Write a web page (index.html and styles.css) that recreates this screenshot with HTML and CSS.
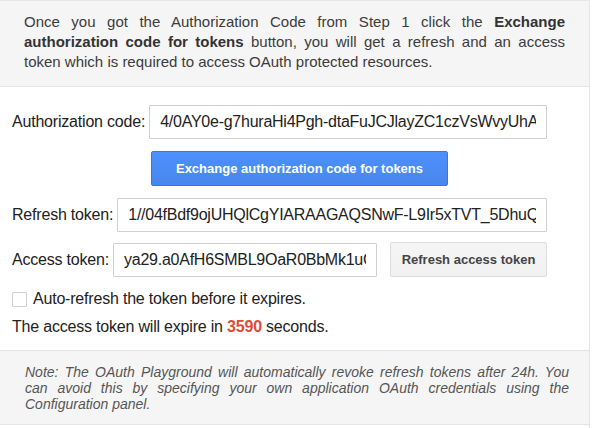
FILE: index.html
```html
<!DOCTYPE html>
<html lang="en">
<head>
<meta charset="utf-8">
<title>OAuth Playground - Step 2</title>
<link rel="stylesheet" href="styles.css">
</head>
<body>
<div class="panel">
  <div class="intro"><span>Once you got the Authorization Code from Step 1 click the</span> <b>Exchange</b> <b>authorization code for tokens</b> <span>button, you will get a refresh and an access</span> <span>token which is required to access OAuth protected resources.</span></div>
  <div class="form">
    <div class="row">
      <label class="label" for="code">Authorization code:</label>
      <input class="field" id="code" type="text" readonly value="4/0AY0e-g7huraHi4Pgh-dtaFuJCJlayZC1czVsWvyUhAWk3nXbQp8RtZmLq2sVdE">
    </div>
    <div class="actions">
      <button class="btn btn-primary" type="button">Exchange authorization code for tokens</button>
    </div>
    <div class="row row-refresh">
      <label class="label" for="refresh">Refresh token:</label>
      <input class="field" id="refresh" type="text" readonly value="1//04fBdf9ojUHQlCgYIARAAGAQSNwF-L9Ir5xTVT_5DhuQ3kPzWm0aNvYc">
    </div>
    <div class="row row-access">
      <label class="label" for="access">Access token:</label>
      <input class="field" id="access" type="text" readonly value="ya29.a0AfH6SMBL9OaR0BbMk1uGqZt7wXy2">
      <button class="btn btn-secondary" type="button">Refresh access token</button>
    </div>
    <label class="check-row"><input class="checkbox" type="checkbox"><span>Auto-refresh the token before it expires.</span></label>
    <p class="expire">The access token will expire in <span class="seconds">3590</span> seconds.</p>
  </div>
  <div class="note">Note: The OAuth Playground will automatically revoke refresh tokens after 24h. You can avoid this by specifying your own application OAuth credentials using the Configuration panel.</div>
</div>
</body>
</html>
```

FILE: styles.css
```css
* { box-sizing: border-box; }

html, body {
  margin: 0;
  padding: 0;
  background: #fff;
}

body {
  font-family: "Liberation Sans", Arial, sans-serif;
  color: #222;
}

.panel {
  width: 590px;
  min-height: 428px;
  border-right: 1px solid #e5e5e5;
}

.intro {
  background: #f5f5f5;
  border-top: 1px solid #e8e8e8;
  border-bottom: 1px solid #e5e5e5;
  padding: 11px 24px 14px 24px;
  font-size: 15px;
  line-height: 20px;
  color: #3c3c3c;
  text-align: justify;
}

.intro b {
  color: #333;
}

.form {
  padding: 18px 42px 0 12px;
}

.row {
  display: flex;
  align-items: center;
  gap: 4px;
  height: 34px;
}

.label {
  font-size: 16px;
  letter-spacing: -0.2px;
  white-space: nowrap;
  color: #222;
}

.field {
  flex: 1;
  min-width: 0;
  height: 34px;
  border: 1px solid #d0d0d0;
  border-radius: 1px;
  padding: 0 10px;
  font-family: "Liberation Sans", Arial, sans-serif;
  font-size: 16px;
  letter-spacing: -0.25px;
  color: #222;
  background: #fff;
  outline: none;
}

.actions {
  margin-top: 12px;
  padding-left: 139px;
  display: flex;
}

.btn {
  font-family: "Liberation Sans", Arial, sans-serif;
  font-size: 13px;
  font-weight: bold;
  border-radius: 2px;
  height: 35px;
  padding: 0;
  cursor: pointer;
}

.btn-primary {
  width: 297px;
  color: #fff;
  background: linear-gradient(#4d90fe, #4787ed);
  border: 1px solid #3079ed;
}

.btn-secondary {
  width: 157px;
  margin-left: 9px;
  color: #444;
  background: linear-gradient(#f5f5f5, #f1f1f1);
  border: 1px solid #dcdcdc;
}

.row-refresh {
  margin-top: 12px;
}

.row-access {
  margin-top: 10px;
  height: 35px;
}

.check-row {
  display: flex;
  align-items: center;
  margin-top: 12px;
  height: 20px;
  font-size: 16px;
  letter-spacing: -0.2px;
  color: #222;
}

.checkbox {
  appearance: none;
  -webkit-appearance: none;
  width: 15px;
  height: 15px;
  margin: 0 6px 0 0;
  border: 1px solid #d0d0d0;
  border-radius: 1px;
  background: #fff;
}

.expire {
  margin: 8px 0 13px 0;
  font-size: 16px;
  line-height: 20px;
  letter-spacing: -0.2px;
  color: #222;
}

.seconds {
  color: #dd4b39;
  font-weight: bold;
}

.note {
  background: #f5f5f5;
  border-top: 1px solid #e5e5e5;
  border-bottom: 1px solid #e5e5e5;
  padding: 13px 20px 12px 25px;
  font-size: 14px;
  line-height: 16px;
  font-style: italic;
  color: #555;
  text-align: justify;
}
```
